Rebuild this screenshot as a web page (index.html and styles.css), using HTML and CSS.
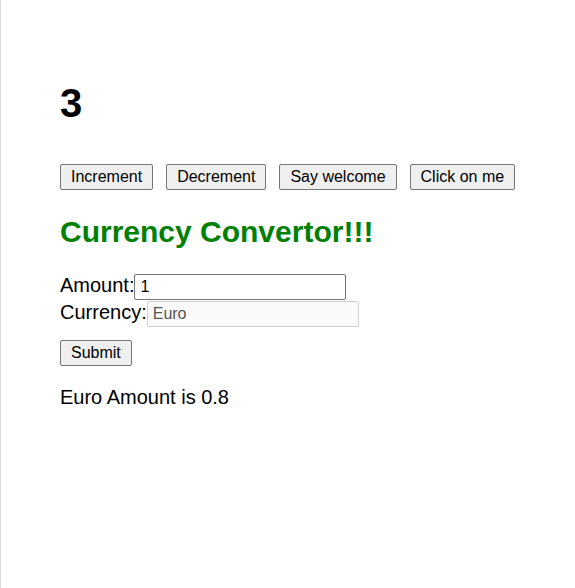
FILE: index.html
```html
<!DOCTYPE html>
<html>
<head>
<meta charset="utf-8">
<link rel="stylesheet" href="styles.css">
</head>
<body>
<div class="frame">
  <h1 class="count">3</h1>
  <div class="actions">
    <button class="btn">Increment</button>
    <button class="btn">Decrement</button>
    <button class="btn">Say welcome</button>
    <button class="btn">Click on me</button>
  </div>
  <h2 class="title">Currency Convertor!!!</h2>
  <form class="form">
    <div class="row">
      <label class="label">Amount:</label><input class="field" type="text" value="1">
    </div>
    <div class="row">
      <label class="label">Currency:</label><input class="field" type="text" value="Euro" disabled>
    </div>
    <button class="btn submit" type="button">Submit</button>
  </form>
  <p class="result">Euro Amount is 0.8</p>
</div>
</body>
</html>
```
FILE: styles.css
```css
html, body {
  margin: 0;
  padding: 0;
  background: #fff;
}
body {
  font-family: "Liberation Sans", Arial, sans-serif;
  color: #000;
}
.frame {
  border-left: 1px solid #d9d9d9;
  min-height: 588px;
  box-sizing: border-box;
  padding: 80px 0 0 59px;
}
.count {
  margin: 0;
  font-size: 40px;
  line-height: 46px;
  font-weight: bold;
}
.actions {
  display: flex;
  gap: 13px;
  margin-top: 38px;
}
.btn {
  font-family: "Liberation Sans", Arial, sans-serif;
  font-size: 16px;
  line-height: 18px;
  padding: 3px 10px;
  height: 26px;
  box-sizing: border-box;
  border: 1px solid #767676;
  border-radius: 2px;
  background: #efefef;
  color: #000;
}
.title {
  margin: 25px 0 0;
  font-size: 30px;
  line-height: 34px;
  font-weight: bold;
  color: #008000;
}
.form {
  margin-top: 25px;
}
.row {
  display: flex;
  align-items: baseline;
  height: 26.5px;
}
.label {
  font-size: 20px;
  line-height: 23px;
}
.field {
  font-family: "Liberation Sans", Arial, sans-serif;
  font-size: 16px;
  line-height: 18px;
  width: 212px;
  height: 26px;
  box-sizing: border-box;
  padding: 3px 5px;
  border: 1px solid #767676;
  border-radius: 2px;
  background: #fff;
  color: #000;
  margin: 0;
}
.field:disabled {
  background: #fafafa;
  border-color: #d0d0d0;
  color: #545454;
}
.submit {
  margin-top: 13px;
}
.result {
  margin: 20px 0 0;
  font-size: 20px;
  line-height: 23px;
}
```
